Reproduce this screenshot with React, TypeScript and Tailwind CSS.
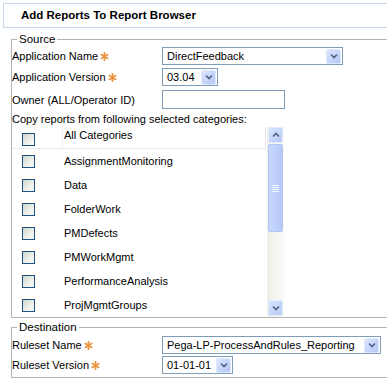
import React from "react";

const Star = () => (
  <svg width="9" height="9" viewBox="0 0 9 9" className="ml-[2px] shrink-0">
    <g stroke="#e8953f" strokeWidth="1.8" strokeLinecap="round">
      <line x1="4.5" y1="0.8" x2="4.5" y2="8.2" />
      <line x1="1.3" y1="2.6" x2="7.7" y2="6.4" />
      <line x1="1.3" y1="6.4" x2="7.7" y2="2.6" />
    </g>
  </svg>
);

const Chevron = ({ up = false }: { up?: boolean }) => (
  <svg width="8" height="6" viewBox="0 0 8 6">
    <path
      d={up ? "M1 4.5 L4 1.5 L7 4.5" : "M1 1.5 L4 4.5 L7 1.5"}
      fill="none"
      stroke="#4d6185"
      strokeWidth="1.6"
    />
  </svg>
);

const Select = ({ w, text }: { w: string; text: string }) => (
  <div className={`flex items-center h-[18px] border border-[#7f9db9] bg-white ${w}`}>
    <span className="flex-1 pl-[4px] text-[11px] leading-none text-black whitespace-nowrap overflow-hidden">
      {text}
    </span>
    <div className="w-[15px] h-[15px] mr-[1px] rounded-[2px] border border-[#dfe8fd] bg-gradient-to-br from-[#dbe5fd] to-[#b4c8f6] flex items-center justify-center">
      <Chevron />
    </div>
  </div>
);

const Label = ({ text, star = false }: { text: string; star?: boolean }) => (
  <div className="w-[150px] flex items-center text-[11px] leading-[14px] text-[#000]">
    <span className="whitespace-nowrap">{text}</span>
    {star && <Star />}
  </div>
);

const Checkbox = () => (
  <div className="w-[13px] h-[13px] border border-[#1c5180] bg-gradient-to-br from-[#d6d6cf] to-[#ffffff]" />
);

const categories = [
  "AssignmentMonitoring",
  "Data",
  "FolderWork",
  "PMDefects",
  "PMWorkMgmt",
  "PerformanceAnalysis",
  "ProjMgmtGroups",
];

export default function App() {
  return (
    <div className="w-[387px] h-[387px] bg-white overflow-hidden font-['Liberation_Sans',Arial,sans-serif] text-black">
      {/* Header */}
      <div className="mt-[3px] ml-[3px] w-[400px] h-[25px] border-y border-l border-[#c9d7ea] flex items-center pl-[17px]">
        <span className="text-[11.5px] font-bold leading-none text-black">
          Add Reports To Report Browser
        </span>
      </div>

      {/* Source */}
      <div className="relative mt-[11px] ml-[11px] w-[420px] border-y border-l border-[#b4b4b4]">
        <span className="absolute -top-[8px] left-[5px] bg-white px-[2px] text-[11.5px] leading-[14px]">
          Source
        </span>
        <div className="pt-[7px] pl-[0px]">
          <div className="flex items-center h-[18px]">
            <Label text="Application Name" star />
            <Select w="w-[181px]" text="DirectFeedback" />
          </div>
          <div className="flex items-center h-[18px] mt-[3px]">
            <Label text="Application Version" star />
            <Select w="w-[56px]" text="03.04" />
          </div>
          <div className="flex items-center h-[19px] mt-[4px]">
            <Label text="Owner (ALL/Operator ID)" />
            <div className="w-[123px] h-[19px] border border-[#7f9db9] bg-white" />
          </div>
          <div className="mt-[3px] text-[11px] leading-[14px] whitespace-nowrap">
            Copy reports from following selected categories:
          </div>

          {/* List */}
          <div className="mt-[1px] flex w-[272px] h-[190px]">
            <div className="flex-1 flex flex-col">
              <div className="flex h-[22px] border-b border-r border-[#ebebef]">
                <div className="w-[51px] border-r border-[#f0f0f3] pl-[10px] pt-[6px]">
                  <Checkbox />
                </div>
                <div className="pl-[1px] pt-[1px] text-[11px] leading-[14px]">All Categories</div>
              </div>
              {categories.map((c) => (
                <div key={c} className="flex items-center h-[24px]">
                  <div className="w-[51px] pl-[10px] flex items-center">
                    <Checkbox />
                  </div>
                  <div className="pl-[1px] text-[11px] leading-[14px] whitespace-nowrap">{c}</div>
                </div>
              ))}
            </div>
            {/* Scrollbar */}
            <div className="ml-[1px] w-[17px] flex flex-col bg-gradient-to-r from-[#efeee7] to-[#fbfbf8]">
              <div className="h-[16px] mx-[1px] rounded-[2px] border border-[#e3ebfd] bg-gradient-to-br from-[#d7e2fd] to-[#b8cbf8] flex items-center justify-center">
                <Chevron up />
              </div>
              <div className="mt-[1px] h-[88px] mx-[1px] rounded-[2px] border border-[#b0c5f5] bg-gradient-to-r from-[#c9d8fd] to-[#b5c9f7] flex flex-col items-center justify-center gap-[1px]">
                <div className="w-[7px] h-[1px] bg-[#eef3fe]" />
                <div className="w-[7px] h-[1px] bg-[#eef3fe]" />
                <div className="w-[7px] h-[1px] bg-[#eef3fe]" />
                <div className="w-[7px] h-[1px] bg-[#eef3fe]" />
              </div>
              <div className="flex-1" />
              <div className="h-[16px] mx-[1px] mb-[1px] rounded-[2px] border border-[#e3ebfd] bg-gradient-to-br from-[#d7e2fd] to-[#b8cbf8] flex items-center justify-center">
                <Chevron />
              </div>
            </div>
          </div>
        </div>
      </div>

      {/* Destination */}
      <div className="relative mt-[9px] ml-[11px] w-[420px] border-y border-l border-[#b4b4b4]">
        <span className="absolute -top-[8px] left-[5px] bg-white px-[2px] text-[11.5px] leading-[14px]">
          Destination
        </span>
        <div className="pt-[8px] pb-[3px]">
          <div className="flex items-center h-[18px]">
            <Label text="Ruleset Name" star />
            <Select w="w-[219px]" text="Pega-LP-ProcessAndRules_Reporting" />
          </div>
          <div className="flex items-center h-[18px] mt-[2px]">
            <Label text="Ruleset Version" star />
            <Select w="w-[71px]" text="01-01-01" />
          </div>
        </div>
      </div>
    </div>
  );
}
